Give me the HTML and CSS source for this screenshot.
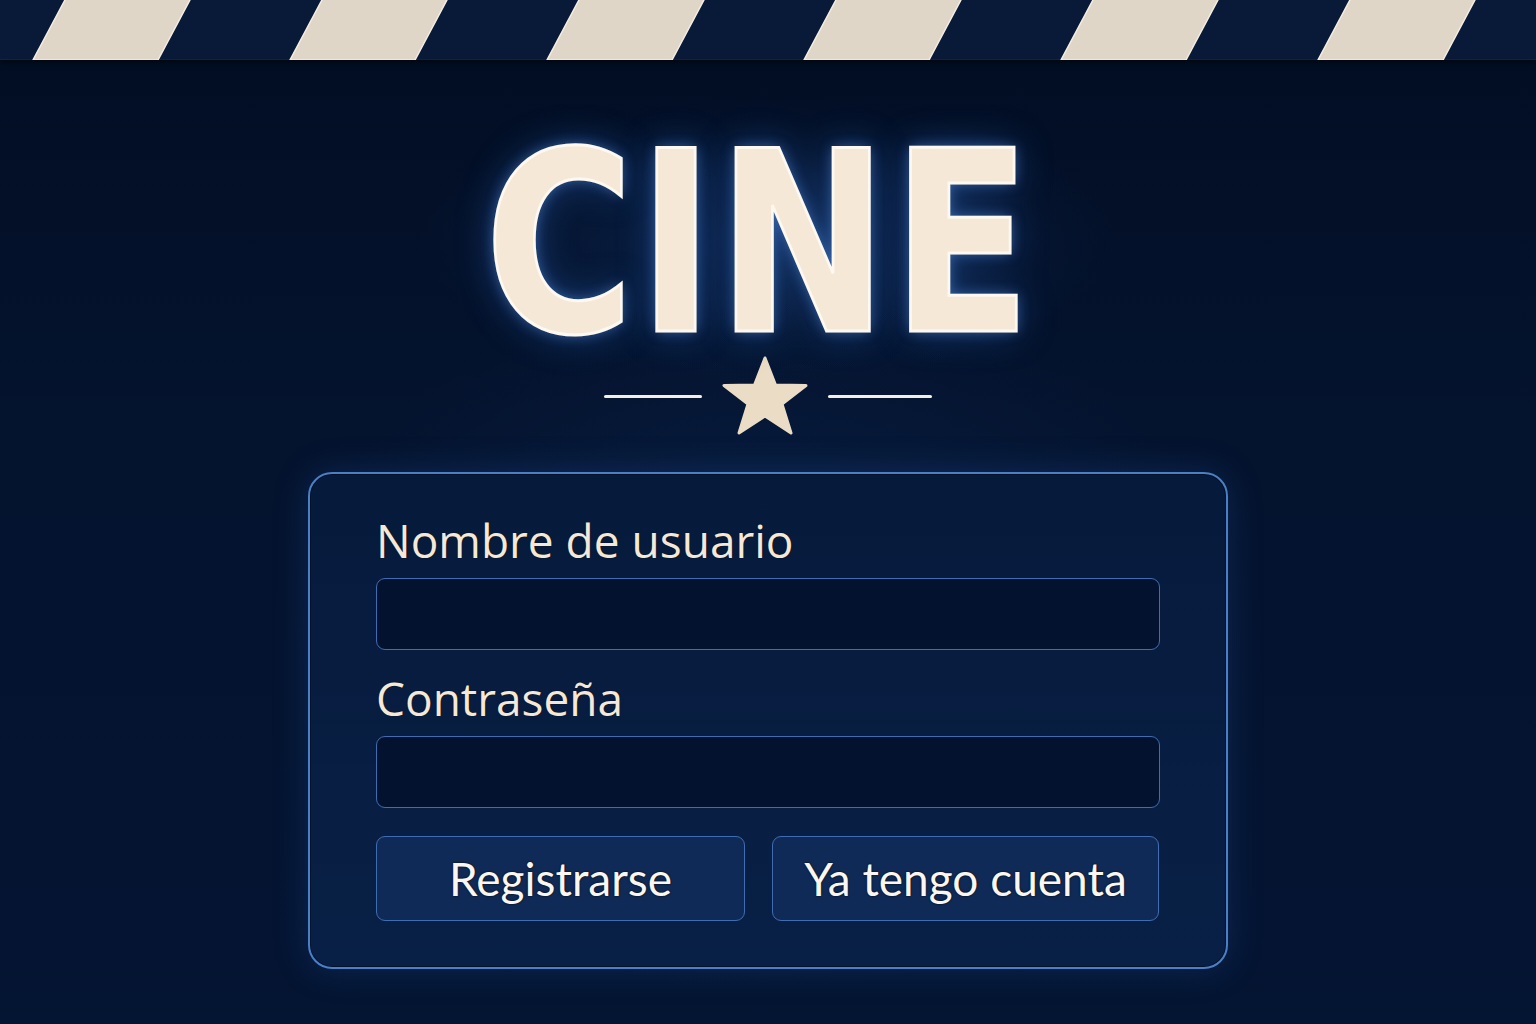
FILE: index.html
```html
<!DOCTYPE html>
<html lang="es">
<head>
<meta charset="utf-8">
<title>CINE</title>
<link rel="stylesheet" href="styles.css">
</head>
<body>
<header class="clapper">
  <svg class="clapper-svg" width="1536" height="60" viewBox="0 0 1536 60" xmlns="http://www.w3.org/2000/svg">
    <g fill="#e0d6c8" stroke="#f4ede2" stroke-width="1.5">
      <polygon points="66,-2 191,-2 158,60 33,60"/>
      <polygon points="323,-2 448,-2 415,60 290,60"/>
      <polygon points="580,-2 705,-2 672,60 547,60"/>
      <polygon points="837,-2 962,-2 929,60 804,60"/>
      <polygon points="1094,-2 1219,-2 1186,60 1061,60"/>
      <polygon points="1351,-2 1476,-2 1443,60 1318,60"/>
    </g>
  </svg>
</header>
<main class="page">
  <h1 class="title">CINE</h1>
  <div class="divider">
    <span class="rule"></span>
    <svg class="star" width="90" height="82" viewBox="0 0 90 82" xmlns="http://www.w3.org/2000/svg">
      <path d="M45 3 L55.5 30 L86 30.5 L62 49 L71 78 L45 61 L19 78 L28 49 L4 30.5 L34.5 30 Z" fill="#ebdcc6" stroke="#ebdcc6" stroke-width="3" stroke-linejoin="round"/>
    </svg>
    <span class="rule"></span>
  </div>
  <form class="card">
    <label class="label" for="user">Nombre de usuario</label>
    <input class="field" id="user" type="text">
    <label class="label label-second" for="pass">Contraseña</label>
    <input class="field" id="pass" type="password">
    <div class="actions">
      <button type="button" class="btn btn-register">Registrarse</button>
      <button type="button" class="btn btn-login">Ya tengo cuenta</button>
    </div>
  </form>
</main>
</body>
</html>
```

FILE: styles.css
```css
* { box-sizing: border-box; }

html, body {
  margin: 0;
  padding: 0;
  height: 100%;
}

body {
  width: 1536px;
  height: 1024px;
  overflow: hidden;
  background:
    radial-gradient(ellipse 700px 500px at 768px 640px, rgba(14, 44, 92, 0.5), rgba(4, 18, 45, 0) 70%),
    radial-gradient(ellipse 500px 200px at 768px 240px, rgba(18, 52, 104, 0.45), rgba(4, 18, 45, 0) 70%),
    linear-gradient(180deg, #020d22 0%, #04132e 40%, #041533 100%);
  font-family: "Lato", "Open Sans", sans-serif;
  color: #f3e6d4;
}

.clapper {
  height: 60px;
  background: #081a38;
  border-bottom: 1px solid #0d2446;
  box-shadow: 0 2px 6px rgba(0, 0, 0, 0.6);
}

.clapper-svg { display: block; }

.page {
  display: flex;
  flex-direction: column;
  align-items: center;
}

.title {
  margin: 74px 16px 0 0;
  font-family: "DejaVu Sans Condensed", "DejaVu Sans", sans-serif;
  font-weight: bold;
  font-size: 252px;
  line-height: 220px;
  letter-spacing: 4px;
  transform: scaleX(0.9);
  color: #f6e8d6;
  -webkit-text-stroke: 3px #fdf8f0;
  text-shadow:
    0 0 2px #0a1a36,
    0 0 14px rgba(90, 150, 235, 0.55),
    0 0 40px rgba(50, 110, 200, 0.45);
}

.divider {
  display: flex;
  align-items: center;
  gap: 18px;
  margin-top: 0;
  height: 84px;
}

.rule {
  width: 98px;
  height: 3px;
  background: #f4efe6;
  border-radius: 2px;
}

.rule:last-child { width: 104px; }

.star { display: block; }

.card {
  margin-top: 34px;
  width: 920px;
  height: 497px;
  border: 2px solid #4a80c8;
  border-radius: 24px;
  background: linear-gradient(180deg, #061a3b 0%, #092046 100%);
  box-shadow: 0 0 34px rgba(40, 90, 170, 0.28), inset 0 0 0 1px rgba(0, 0, 0, 0.4);
  padding: 38px 66px 0 66px;
  display: flex;
  flex-direction: column;
}

.label {
  font-family: "Open Sans", "Lato", sans-serif;
  font-size: 46px;
  line-height: 56px;
  color: #f6e8d6;
  text-shadow: 0 0 1px #000;
}

.label-second { margin-top: 20px; }

.field {
  margin-top: 10px;
  height: 72px;
  width: 100%;
  border: 1.5px solid #3f6db3;
  border-radius: 9px;
  background: #03122f;
  outline: none;
}

.actions {
  margin-top: 28px;
  display: flex;
  gap: 27px;
}

.btn {
  height: 85px;
  border: 1.5px solid #3f6db3;
  border-radius: 9px;
  background: #0f2a56;
  color: #fbf7f0;
  font-family: "Lato", "Open Sans", sans-serif;
  font-size: 46px;
  padding: 0;
  text-shadow: 0 0 2px #000;
}

.btn-register { width: 369px; }
.btn-login { width: 387px; }
```
